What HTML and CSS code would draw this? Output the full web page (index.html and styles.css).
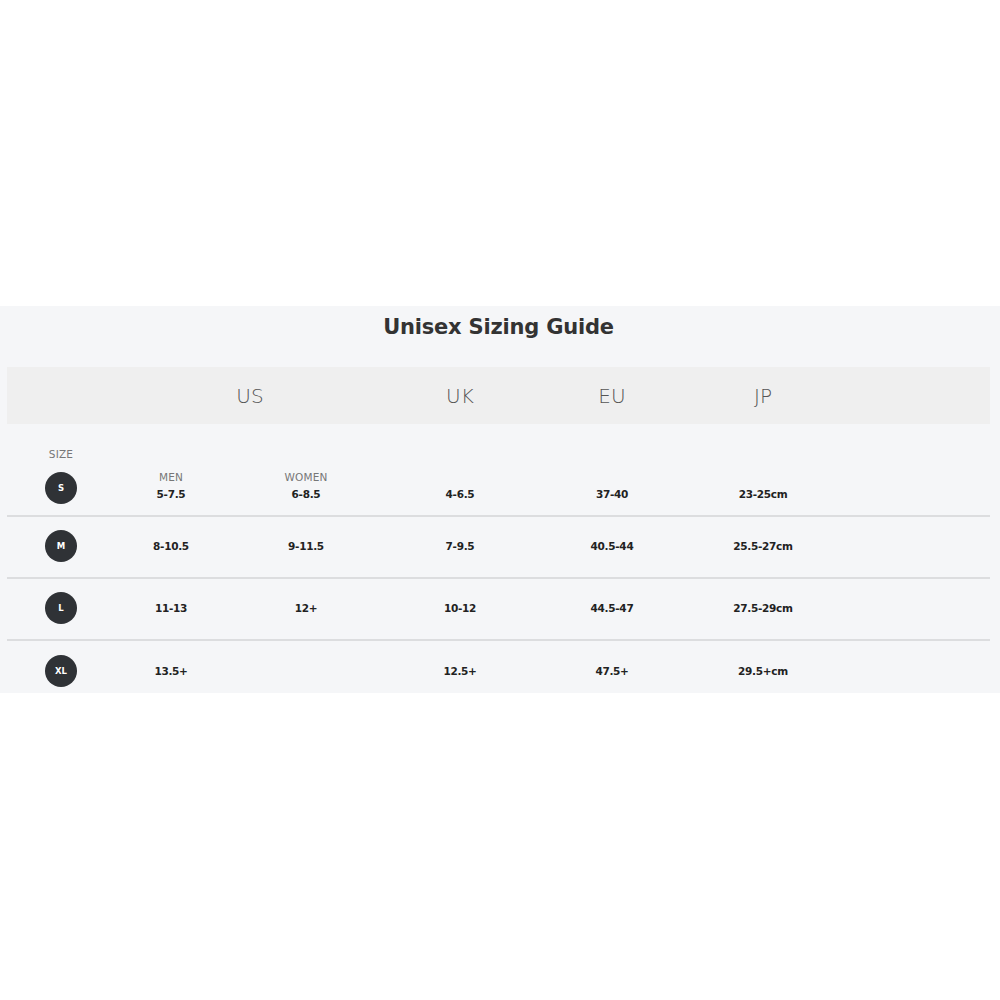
FILE: index.html
```html
<!DOCTYPE html>
<html lang="en">
<head>
<meta charset="utf-8">
<title>Unisex Sizing Guide</title>
<link rel="stylesheet" href="styles.css">
</head>
<body>
<main class="page">
  <section class="guide">
    <h1 class="guide-title">Unisex Sizing Guide</h1>
    <div class="grid band">
      <div class="band-cell band-us">US</div>
      <div class="band-cell">UK</div>
      <div class="band-cell">EU</div>
      <div class="band-cell">JP</div>
    </div>

    <div class="grid row row-first">
      <div class="cell size-cell">
        <span class="label size-label">SIZE</span>
        <span class="badge">S</span>
      </div>
      <div class="cell val"><span class="label">MEN</span><span class="num">5-7.5</span></div>
      <div class="cell val"><span class="label">WOMEN</span><span class="num">6-8.5</span></div>
      <div class="cell val"><span class="num">4-6.5</span></div>
      <div class="cell val"><span class="num">37-40</span></div>
      <div class="cell val"><span class="num">23-25cm</span></div>
    </div>

    <div class="grid row">
      <div class="cell size-cell"><span class="badge">M</span></div>
      <div class="cell"><span class="num">8-10.5</span></div>
      <div class="cell"><span class="num">9-11.5</span></div>
      <div class="cell"><span class="num">7-9.5</span></div>
      <div class="cell"><span class="num">40.5-44</span></div>
      <div class="cell"><span class="num">25.5-27cm</span></div>
    </div>

    <div class="grid row">
      <div class="cell size-cell"><span class="badge">L</span></div>
      <div class="cell"><span class="num">11-13</span></div>
      <div class="cell"><span class="num">12+</span></div>
      <div class="cell"><span class="num">10-12</span></div>
      <div class="cell"><span class="num">44.5-47</span></div>
      <div class="cell"><span class="num">27.5-29cm</span></div>
    </div>

    <div class="grid row row-last">
      <div class="cell size-cell"><span class="badge">XL</span></div>
      <div class="cell"><span class="num">13.5+</span></div>
      <div class="cell"><span class="num"></span></div>
      <div class="cell"><span class="num">12.5+</span></div>
      <div class="cell"><span class="num">47.5+</span></div>
      <div class="cell"><span class="num">29.5+cm</span></div>
    </div>
  </section>
</main>
</body>
</html>
```

FILE: styles.css
```css
* { box-sizing: border-box; }

html, body {
  margin: 0;
  padding: 0;
  background: #ffffff;
}

body {
  font-family: "DejaVu Sans", "Liberation Sans", sans-serif;
  color: #222;
}

.page {
  padding-top: 306px;
}

.guide {
  background: #f5f6f8;
  padding: 7px 10px 0 7px;
}

.guide-title {
  margin: 0;
  height: 40px;
  line-height: 28px;
  text-align: center;
  font-size: 21px;
  font-weight: 700;
  color: #333;
  letter-spacing: -0.2px;
}

.grid {
  display: grid;
  grid-template-columns: 108px 112px 158px 150px 154px 148px 1fr;
}

.band {
  margin-top: 14px;
  height: 57px;
  background: #efefef;
  align-items: center;
}

.band-cell {
  text-align: center;
  font-size: 20px;
  font-weight: 300;
  color: #555;
}

.band-us { grid-column: 2 / 4; }
.band-cell:nth-child(2) { grid-column: 4; }
.band-cell:nth-child(3) { grid-column: 5; }
.band-cell:nth-child(4) { grid-column: 6; }

.row {
  height: 62px;
  border-top: 2px solid #dcdddf;
  align-items: center;
  padding-bottom: 2px;
}

.row-first {
  border-top: none;
  height: 91px;
  align-items: end;
  padding-bottom: 11px;
}

.row-last {
  height: 54px;
  padding-top: 8px;
  padding-bottom: 0;
  align-items: center;
}

.cell {
  display: flex;
  flex-direction: column;
  align-items: center;
}

.row-first .val {
  padding-bottom: 4px;
}

.label {
  font-size: 10.5px;
  line-height: 12px;
  color: #777;
  font-weight: 400;
  letter-spacing: 0.2px;
  margin-bottom: 5px;
}

.size-label {
  margin-bottom: 12px;
}

.num {
  font-size: 10.5px;
  line-height: 12px;
  font-weight: 700;
  color: #222;
  letter-spacing: -0.3px;
}

.badge {
  width: 32px;
  height: 32px;
  border-radius: 50%;
  background: #2f3236;
  color: #fff;
  font-size: 8.5px;
  font-weight: 700;
  display: flex;
  align-items: center;
  justify-content: center;
}
```
